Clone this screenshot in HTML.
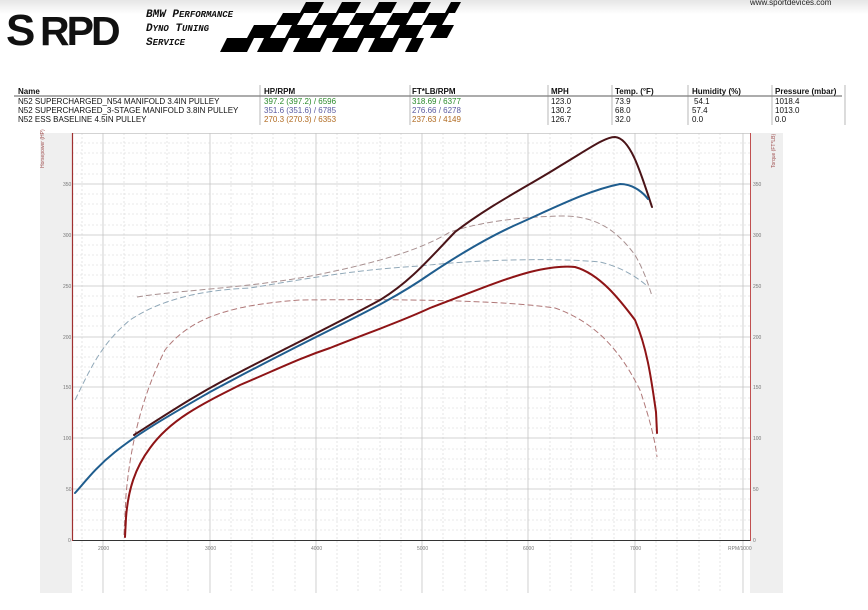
<!DOCTYPE html>
<html><head><meta charset="utf-8"><style>
html,body{margin:0;padding:0;background:#fff;width:868px;height:610px;overflow:hidden;font-family:"Liberation Sans",sans-serif}
</style></head><body>
<svg width="868" height="610" viewBox="0 0 868 610" xmlns="http://www.w3.org/2000/svg" font-family="Liberation Sans, sans-serif">
<defs><linearGradient id="tg" x1="0" y1="0" x2="0" y2="1"><stop offset="0" stop-color="#e6e6e6"/><stop offset="1" stop-color="#fff"/></linearGradient></defs>
<rect x="0" y="0" width="868" height="14" fill="url(#tg)"/>
<!-- logo -->
<text x="6" y="45" font-size="44" font-weight="bold" letter-spacing="-3" fill="#111" transform="scale(1,1)">S</text>
<text x="40" y="45" font-size="41" font-weight="bold" letter-spacing="-3" fill="#111">RPD</text>
<g font-family="Liberation Mono, monospace" font-style="italic" font-weight="bold" font-size="11" fill="#111">
<text x="146" y="17">BMW P<tspan font-size="9">ERFORMANCE</tspan></text>
<text x="146" y="31">D<tspan font-size="9">YNO</tspan> T<tspan font-size="9">UNING</tspan></text>
<text x="146" y="45">S<tspan font-size="9">ERVICE</tspan></text>
</g>
<g fill="#000">
<polygon points="306,2 324,2 318,13 300,13"/><polygon points="342,2 361,2 355,13 336,13"/><polygon points="379,2 397,2 391,13 373,13"/><polygon points="414,2 431,2 425,13 408,13"/><polygon points="451,2 461,2 455,13 445,13"/>
<polygon points="283,13 304,13 297,25 276,25"/><polygon points="319,13 339,13 332,25 312,25"/><polygon points="356,13 376,13 369,25 349,25"/><polygon points="393,13 413,13 406,25 386,25"/><polygon points="429,13 449,13 442,25 422,25"/>
<polygon points="254,25 277,25 270,38 247,38"/><polygon points="292,25 314,25 307,38 285,38"/><polygon points="327,25 350,25 343,38 320,38"/><polygon points="364,25 387,25 380,38 357,38"/><polygon points="400,25 423,25 416,38 393,38"/><polygon points="437,25 454,25 447,38 430,38"/>
<polygon points="227,38 254,38 247,52 220,52"/><polygon points="264,38 289,38 282,52 257,52"/><polygon points="300,38 327,38 320,52 293,52"/><polygon points="339,38 364,38 357,52 332,52"/><polygon points="375,38 399,38 392,52 368,52"/><polygon points="412,38 424,38 417,52 405,52"/>
</g>
<text x="750" y="5" font-size="8" fill="#222">www.sportdevices.com</text>
<!-- table -->
<g font-size="8" fill="#111">
<line x1="14" y1="96" x2="842" y2="96" stroke="#222" stroke-width="0.8"/>
<g stroke="#888" stroke-width="0.6"><line x1="260" y1="85" x2="260" y2="125"/><line x1="410" y1="85" x2="410" y2="125"/><line x1="548" y1="85" x2="548" y2="125"/><line x1="612" y1="85" x2="612" y2="125"/><line x1="688" y1="85" x2="688" y2="125"/><line x1="772" y1="85" x2="772" y2="125"/><line x1="845" y1="85" x2="845" y2="125"/></g>
<g font-weight="bold"><text x="18" y="94">Name</text><text x="264" y="94">HP/RPM</text><text x="412" y="94">FT*LB/RPM</text><text x="551" y="94">MPH</text><text x="615" y="94">Temp. (°F)</text><text x="692" y="94">Humidity (%)</text><text x="775" y="94">Pressure (mbar)</text></g>
<text x="18" y="104">N52 SUPERCHARGED_N54 MANIFOLD 3.4IN PULLEY</text>
<text x="18" y="113">N52 SUPERCHARGED_3-STAGE MANIFOLD 3.8IN PULLEY</text>
<text x="18" y="122">N52 ESS BASELINE 4.5IN PULLEY</text>
<text x="264" y="104" fill="#2a8a2a">397.2 (397.2) / 6596</text><text x="412" y="104" fill="#2a8a2a">318.69 / 6377</text>
<text x="264" y="113" fill="#5a5aa0">351.6 (351.6) / 6785</text><text x="412" y="113" fill="#5a5aa0">276.66 / 6278</text>
<text x="264" y="122" fill="#b06a20">270.3 (270.3) / 6353</text><text x="412" y="122" fill="#b06a20">237.63 / 4149</text>
<text x="551" y="104">123.0</text><text x="551" y="113">130.2</text><text x="551" y="122">126.7</text>
<text x="615" y="104">73.9</text><text x="615" y="113">68.0</text><text x="615" y="122">32.0</text>
<text x="694" y="104">54.1</text><text x="692" y="113">57.4</text><text x="692" y="122">0.0</text>
<text x="775" y="104">1018.4</text><text x="775" y="113">1013.0</text><text x="775" y="122">0.0</text>
</g>
<!-- chart panels -->
<rect x="40" y="133" width="32" height="460" fill="#efefef"/>
<rect x="750" y="133" width="33" height="460" fill="#efefef"/>
<g stroke="#d6d6d6" stroke-width="0.6" stroke-dasharray="2,2">
<line x1="72" y1="143" x2="750" y2="143"/><line x1="72" y1="153" x2="750" y2="153"/><line x1="72" y1="164" x2="750" y2="164"/><line x1="72" y1="174" x2="750" y2="174"/>
<line x1="72" y1="194" x2="750" y2="194"/><line x1="72" y1="204" x2="750" y2="204"/><line x1="72" y1="214" x2="750" y2="214"/><line x1="72" y1="225" x2="750" y2="225"/>
<line x1="72" y1="245" x2="750" y2="245"/><line x1="72" y1="255" x2="750" y2="255"/><line x1="72" y1="265" x2="750" y2="265"/><line x1="72" y1="275" x2="750" y2="275"/>
<line x1="72" y1="296" x2="750" y2="296"/><line x1="72" y1="306" x2="750" y2="306"/><line x1="72" y1="316" x2="750" y2="316"/><line x1="72" y1="326" x2="750" y2="326"/>
<line x1="72" y1="347" x2="750" y2="347"/><line x1="72" y1="357" x2="750" y2="357"/><line x1="72" y1="367" x2="750" y2="367"/><line x1="72" y1="377" x2="750" y2="377"/>
<line x1="72" y1="398" x2="750" y2="398"/><line x1="72" y1="408" x2="750" y2="408"/><line x1="72" y1="418" x2="750" y2="418"/><line x1="72" y1="428" x2="750" y2="428"/>
<line x1="72" y1="449" x2="750" y2="449"/><line x1="72" y1="459" x2="750" y2="459"/><line x1="72" y1="469" x2="750" y2="469"/><line x1="72" y1="479" x2="750" y2="479"/>
<line x1="72" y1="499" x2="750" y2="499"/><line x1="72" y1="510" x2="750" y2="510"/><line x1="72" y1="520" x2="750" y2="520"/><line x1="72" y1="530" x2="750" y2="530"/>
<line x1="82" y1="133" x2="82" y2="593"/><line x1="124" y1="133" x2="124" y2="593"/><line x1="146" y1="133" x2="146" y2="593"/><line x1="167" y1="133" x2="167" y2="593"/><line x1="188" y1="133" x2="188" y2="593"/>
<line x1="231" y1="133" x2="231" y2="593"/><line x1="252" y1="133" x2="252" y2="593"/><line x1="273" y1="133" x2="273" y2="593"/><line x1="295" y1="133" x2="295" y2="593"/>
<line x1="337" y1="133" x2="337" y2="593"/><line x1="358" y1="133" x2="358" y2="593"/><line x1="380" y1="133" x2="380" y2="593"/><line x1="401" y1="133" x2="401" y2="593"/>
<line x1="443" y1="133" x2="443" y2="593"/><line x1="465" y1="133" x2="465" y2="593"/><line x1="486" y1="133" x2="486" y2="593"/><line x1="507" y1="133" x2="507" y2="593"/>
<line x1="550" y1="133" x2="550" y2="593"/><line x1="571" y1="133" x2="571" y2="593"/><line x1="592" y1="133" x2="592" y2="593"/><line x1="614" y1="133" x2="614" y2="593"/>
<line x1="656" y1="133" x2="656" y2="593"/><line x1="677" y1="133" x2="677" y2="593"/><line x1="699" y1="133" x2="699" y2="593"/><line x1="720" y1="133" x2="720" y2="593"/>
</g>
<g stroke="#c4c4c4" stroke-width="0.8">
<line x1="72" y1="133.5" x2="750" y2="133.5"/><line x1="72" y1="184" x2="750" y2="184"/><line x1="72" y1="235" x2="750" y2="235"/><line x1="72" y1="286" x2="750" y2="286"/><line x1="72" y1="337" x2="750" y2="337"/><line x1="72" y1="387" x2="750" y2="387"/><line x1="72" y1="438" x2="750" y2="438"/><line x1="72" y1="489" x2="750" y2="489"/>
<line x1="103" y1="133" x2="103" y2="593"/><line x1="210" y1="133" x2="210" y2="593"/><line x1="316" y1="133" x2="316" y2="593"/><line x1="422" y1="133" x2="422" y2="593"/><line x1="528" y1="133" x2="528" y2="593"/><line x1="635" y1="133" x2="635" y2="593"/><line x1="743" y1="133" x2="743" y2="593"/>
</g>
<line x1="72" y1="540.5" x2="750" y2="540.5" stroke="#333" stroke-width="1"/>
<line x1="72.5" y1="133" x2="72.5" y2="541" stroke="#a03030" stroke-width="1.2"/>
<line x1="750.5" y1="133" x2="750.5" y2="541" stroke="#c05050" stroke-width="1"/>
<g font-size="5" fill="#777">
<text x="63" y="186">350</text><text x="63" y="237">300</text><text x="63" y="288">250</text><text x="63" y="339">200</text><text x="63" y="389">150</text><text x="63" y="440">100</text><text x="66" y="491">50</text><text x="68" y="542">0</text>
<text x="753" y="186">350</text><text x="753" y="237">300</text><text x="753" y="288">250</text><text x="753" y="339">200</text><text x="753" y="389">150</text><text x="753" y="440">100</text><text x="753" y="491">50</text><text x="753" y="542">0</text>
<text x="98" y="550">2000</text><text x="205" y="550">3000</text><text x="311" y="550">4000</text><text x="417" y="550">5000</text><text x="523" y="550">6000</text><text x="630" y="550">7000</text><text x="728" y="550">RPM/1000</text>
<text transform="translate(44,168) rotate(-90)" fill="#a05050">Horsepower (HP)</text>
<text transform="translate(775,168) rotate(-90)" fill="#a05050">Torque (FT*LB)</text>
</g>
<!-- dashed torque -->
<g fill="none" stroke-width="1" stroke-dasharray="6,3">
<path d="M137,297 C180,290 250,288 316,275 C380,262 420,250 450,232 C480,222 520,217 560,216 C600,215 620,235 635,255 C645,272 650,290 652,296" stroke="#a89090"/>
<path d="M75,400 C90,370 100,345 130,320 C160,300 200,290 250,288 C300,280 350,270 420,266 C480,259 560,258 600,262 C625,268 640,280 646,285" stroke="#90a8b8"/>
<path d="M124,535 L126,495 C130,450 140,400 165,350 C190,318 230,305 300,300 C400,299 500,300 555,308 C595,322 620,350 640,390 C650,420 655,440 657,457" stroke="#b07878"/>
</g>
<!-- HP curves -->
<g fill="none" stroke-width="2" stroke-linecap="round">
<path d="M134,435 C170,412 200,392 240,372 C290,346 340,322 380,300 C410,282 430,258 455,232 C490,205 530,185 560,166 C590,148 605,137 615,137 C630,138 640,170 652,207" stroke="#4a1418"/>
<path d="M75,493 C85,482 95,468 115,452 C140,432 170,415 210,392 C260,365 300,345 330,330 C370,310 400,295 430,274 C460,254 490,236 520,223 C560,205 590,190 620,184 C635,184 645,195 648,199" stroke="#1f5d8e"/>
<path d="M125,537 L126,518 C128,490 135,468 150,448 C170,420 200,405 240,385 C280,368 300,358 330,348 C370,332 400,322 430,308 C470,293 500,280 530,272 C550,267 565,266 575,267 C600,274 620,300 635,320 C648,350 652,385 656,412 L657,433" stroke="#8e1416"/>
</g>
</svg>
</body></html>
